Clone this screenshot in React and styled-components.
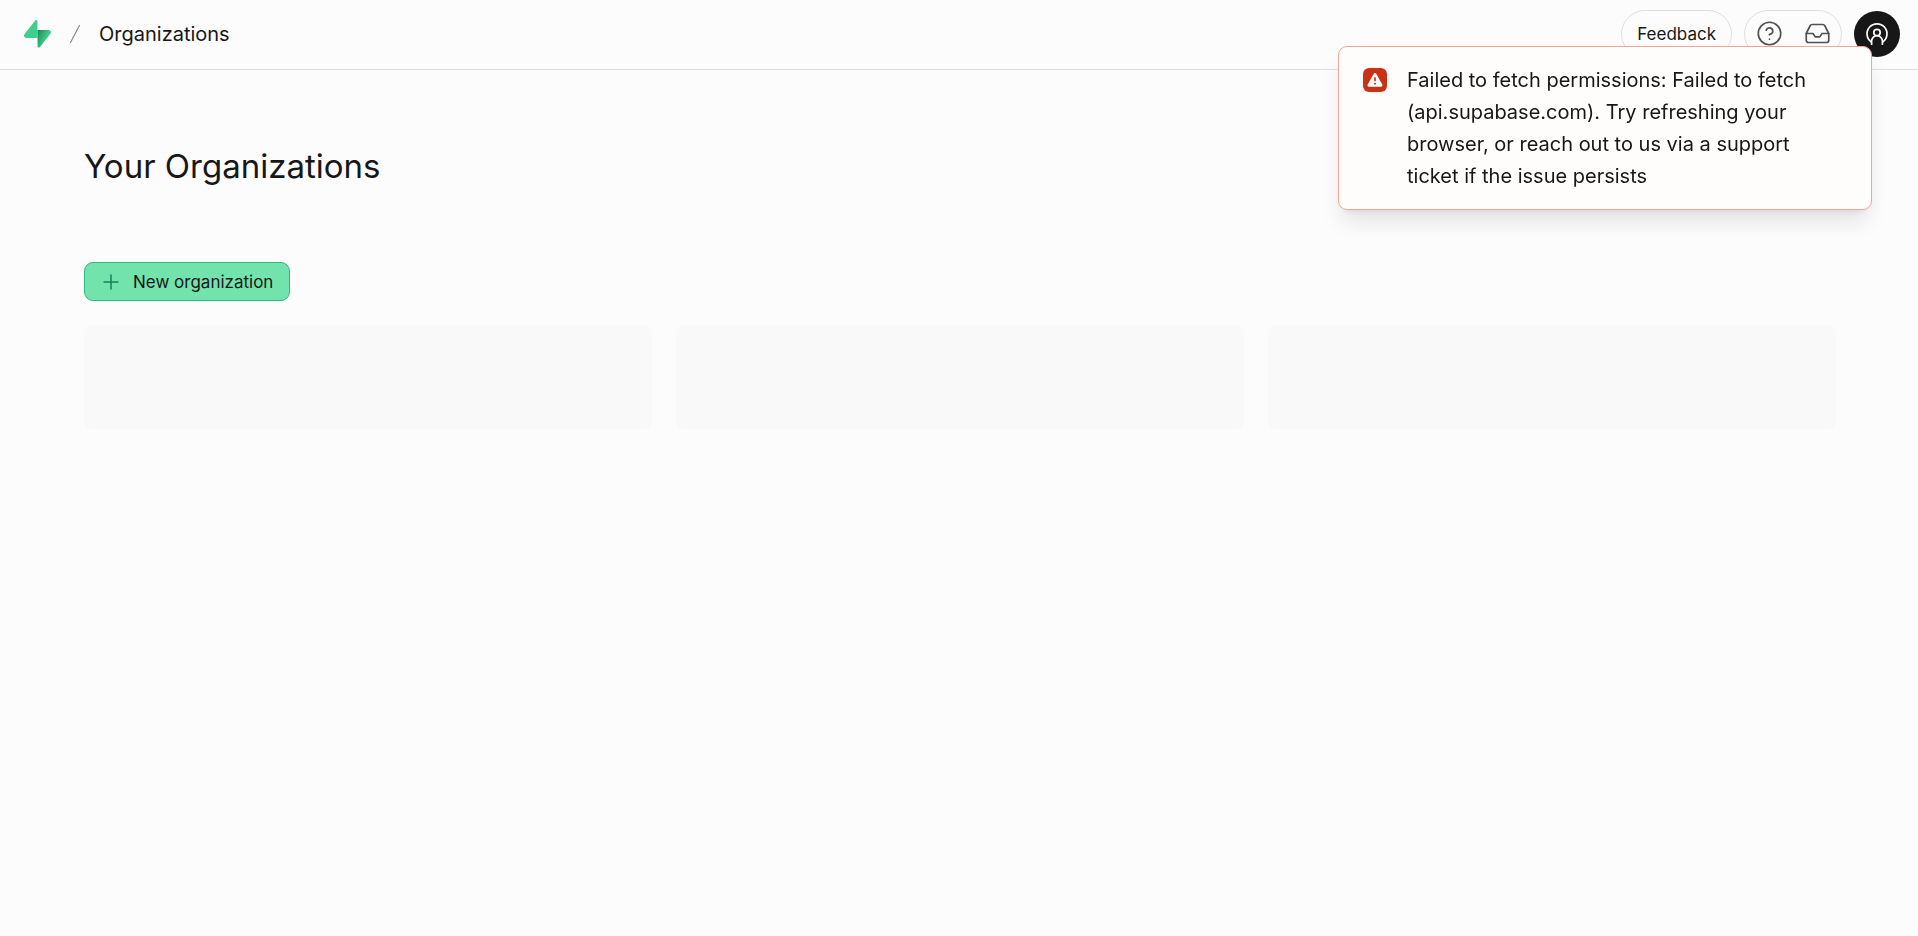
import React from 'react'
import styled, { createGlobalStyle } from 'styled-components'
import { CircleHelp, Inbox, Plus } from 'lucide-react'

const GlobalStyle = createGlobalStyle`
  * {
    box-sizing: border-box;
  }

  body {
    margin: 0;
    background: #fcfcfc;
    color: #171717;
    font-family: Inter, "Liberation Sans", sans-serif;
    font-size: 20px;
  }

  button {
    font-family: inherit;
    cursor: pointer;
  }
`;

const Header = styled.header`
  display: flex;
  align-items: center;
  justify-content: space-between;
  height: 70px;
  padding: 0 18px 2px 24px;
  border-bottom: 1px solid #dfdfdf;
`;

const Breadcrumbs = styled.nav`
  display: flex;
  align-items: center;
  gap: 18px;
`;

const Crumb = styled.a`
  color: #171717;
  line-height: 28px;
  text-decoration: none;
`;

const LogoLink = styled.a`
  display: flex;
`;

const Actions = styled.div`
  display: flex;
  align-items: center;
  gap: 12px;
`;

const FeedbackButton = styled.button`
  height: 48px;
  padding: 0 15px;
  border: 1px solid #dfdfdf;
  border-radius: 24px;
  background: transparent;
  color: #171717;
  font-size: 17px;
`;

const IconGroup = styled.div`
  display: flex;
  align-items: center;
  height: 48px;
  border: 1px solid #dfdfdf;
  border-radius: 24px;
`;

const IconButton = styled.button`
  display: flex;
  align-items: center;
  justify-content: center;
  width: 48px;
  height: 46px;
  padding: 0;
  border: 0;
  background: transparent;
  color: #525252;
`;

const Avatar = styled.button`
  display: flex;
  align-items: center;
  justify-content: center;
  width: 46px;
  height: 46px;
  padding: 0;
  border: 0;
  border-radius: 50%;
  background: #171717;
  color: #fcfcfc;
`;

const Main = styled.main`
  width: 100%;
  max-width: 1800px;
  margin: 0 auto;
  padding: 72px 23px 72px 25px;
`;

const Title = styled.h1`
  margin: 0 0 72px;
  font-size: 33px;
  font-weight: 400;
  line-height: 48px;
`;

const NewButton = styled.button`
  display: flex;
  align-items: center;
  gap: 10px;
  height: 39px;
  margin-bottom: 24px;
  padding: 0 16px 0 14px;
  border: 1px solid #2bbd7e;
  border-radius: 9px;
  background: #72e3ad;
  color: #171717;
  font-size: 17px;

  svg {
    color: #148257;
  }
`;

const CardGrid = styled.div`
  display: grid;
  grid-template-columns: repeat(3, 1fr);
  gap: 24px;

  @media (max-width: 768px) {
    grid-template-columns: 1fr;
  }
`;

const SkeletonCard = styled.div`
  height: 105px;
  border-radius: 9px;
  background: #f9f9f9;
`;

const Toast = styled.div`
  position: fixed;
  top: 46px;
  right: 46px;
  display: flex;
  gap: 20px;
  width: 534px;
  max-width: calc(100vw - 92px);
  padding: 17px 48px 17px 24px;
  border: 1px solid #f5a397;
  border-radius: 9px;
  background: #fffdfc;
  box-shadow: 0 15px 22px -4px rgba(0, 0, 0, 0.1), 0 6px 9px -6px rgba(0, 0, 0, 0.1);
`;

const ToastBadge = styled.span`
  display: flex;
  flex: none;
  align-items: center;
  justify-content: center;
  width: 24px;
  height: 24px;
  margin-top: 4px;
  border-radius: 6px;
  background: #ca3214;
`;

const ToastText = styled.p`
  margin: 0;
  line-height: 32px;
`;

const Logo = () => (
  <svg width="27" height="28" viewBox="0 0 109 113" fill="none" aria-hidden="true">
    <defs>
      <linearGradient id="fold" x1="54" y1="55" x2="94" y2="72" gradientUnits="userSpaceOnUse">
        <stop stopColor="#249361" />
        <stop offset="1" stopColor="#3ecf8e" />
      </linearGradient>
      <linearGradient id="shade" x1="36" y1="31" x2="54" y2="65" gradientUnits="userSpaceOnUse">
        <stop />
        <stop offset="1" stopOpacity="0" />
      </linearGradient>
    </defs>
    <path d="M63.7 110.3c-2.9 3.6-8.7 1.6-8.7-3L54 40.1h45.2c8.2 0 12.8 9.4 7.7 15.8L63.7 110.3Z" fill="url(#fold)" />
    <path d="M63.7 110.3c-2.9 3.6-8.7 1.6-8.7-3L54 40.1h45.2c8.2 0 12.8 9.4 7.7 15.8L63.7 110.3Z" fill="url(#shade)" fillOpacity="0.2" />
    <path d="M45.3 2.1c2.9-3.6 8.7-1.6 8.7 3l.5 67.2H9.8c-8.2 0-12.7-9.5-7.6-15.9L45.3 2.1Z" fill="#3ecf8e" />
  </svg>
)

const Slash = () => (
  <svg width="12" height="20" viewBox="0 0 12 20" fill="none" stroke="#8a8a8a" strokeWidth="1.2" strokeLinecap="round" aria-hidden="true">
    <path d="M10.5 1.5 1.5 18.5" />
  </svg>
)

const ProfileIcon = () => (
  <svg width="24" height="24" viewBox="0 0 24 24" fill="none" stroke="currentColor" strokeWidth="1.7" aria-hidden="true">
    <path d="M6.6 20.2A10 10 0 1 1 17.4 20.2" />
    <circle cx="12" cy="10.6" r="3.2" />
    <path d="M6.6 23v-3.9a5.4 5.4 0 0 1 10.8 0V23" />
  </svg>
)

const WarningIcon = () => (
  <svg width="16" height="14" viewBox="0 0 16 14" aria-hidden="true">
    <path d="M6.8.8a1.4 1.4 0 0 1 2.4 0l6.1 10.8a1.4 1.4 0 0 1-1.2 2.1H1.9a1.4 1.4 0 0 1-1.2-2.1L6.8.8Z" fill="#fff" />
    <path d="M8 4.3v3.9" stroke="#ca3214" strokeWidth="1.7" />
    <circle cx="8" cy="10.8" r="1" fill="#ca3214" />
  </svg>
)

export default function App() {
  return (
    <>
      <GlobalStyle />
      <Header>
        <Breadcrumbs aria-label="Breadcrumb">
          <LogoLink href="#" aria-label="Home">
            <Logo />
          </LogoLink>
          <Slash />
          <Crumb href="#">Organizations</Crumb>
        </Breadcrumbs>
        <Actions>
          <FeedbackButton type="button">Feedback</FeedbackButton>
          <IconGroup>
            <IconButton type="button" aria-label="Help">
              <CircleHelp size={27} strokeWidth={1.5} />
            </IconButton>
            <IconButton type="button" aria-label="Inbox">
              <Inbox size={27} strokeWidth={1.5} />
            </IconButton>
          </IconGroup>
          <Avatar type="button" aria-label="Account">
            <ProfileIcon />
          </Avatar>
        </Actions>
      </Header>

      <Main>
        <Title>Your Organizations</Title>
        <NewButton type="button">
          <Plus size={24} strokeWidth={1.5} />
          New organization
        </NewButton>
        <CardGrid aria-busy="true">
          {[1, 2, 3].map((id) => (
            <SkeletonCard key={id} />
          ))}
        </CardGrid>
      </Main>

      <Toast role="alert">
        <ToastBadge>
          <WarningIcon />
        </ToastBadge>
        <ToastText>
          Failed to fetch permissions: Failed to fetch (api.supabase.com). Try refreshing your
          browser, or reach out to us via a support ticket if the issue persists
        </ToastText>
      </Toast>
    </>
  )
}
